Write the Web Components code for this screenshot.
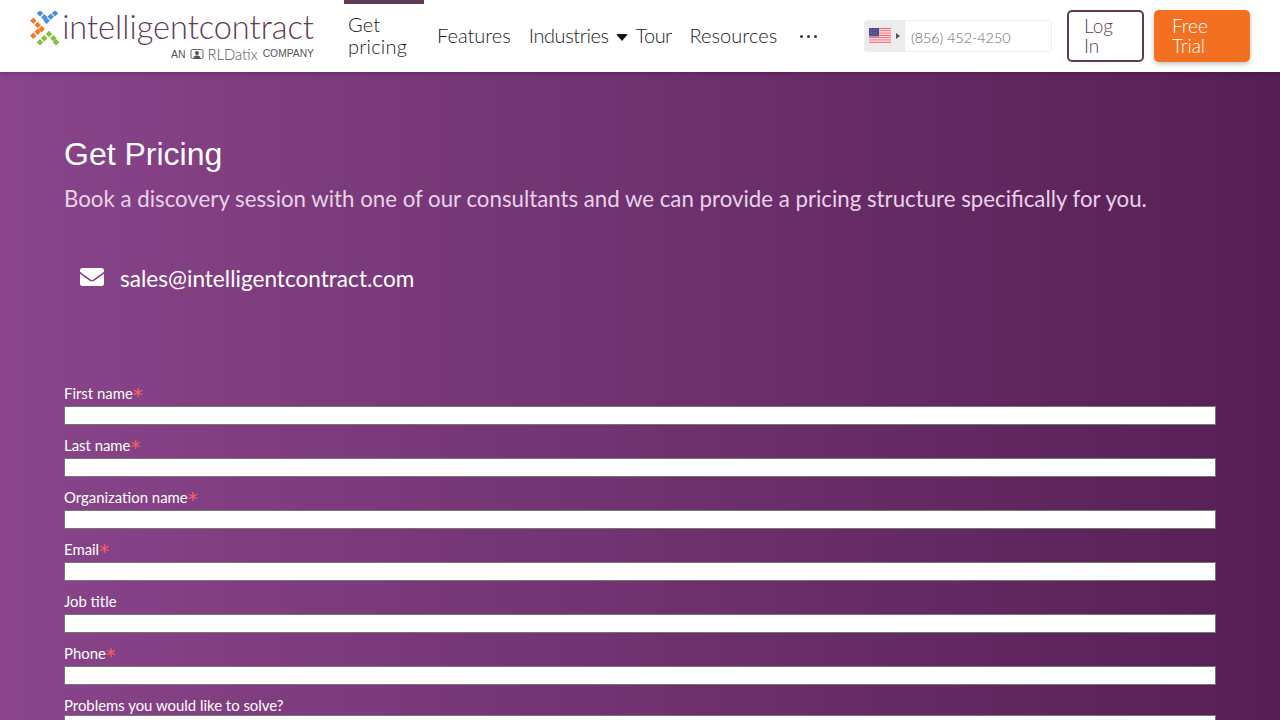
<!doctype html>
<html lang="en"><head><meta charset="utf-8"><title>Get Pricing</title>
<style>
html,body{margin:0;height:720px;overflow:hidden}
body{font-family:Lato,"Liberation Sans",sans-serif;background:linear-gradient(90deg,#8a458b 0%,#551f54 100%)}
</style></head><body>
<site-header></site-header>
<pricing-hero></pricing-hero>
<pricing-form></pricing-form>
<script>
const shadow=(el,html)=>{el.attachShadow({mode:'open'}).innerHTML=html};
class BrandLogo extends HTMLElement{constructor(){super();
const pts=[['#4f8fd6',[[40,14.3],[44.3,18.3],[55,14.3],[50.7,17.7],[46.7,21.7]]],['#f47a26',[[33.3,21.7],[37.7,26],[41.7,30],[33.3,36.7],[37.7,32.7]]],['#86bf3f',[[40,43.3],[44.3,39.3],[49,35],[53.3,39.3],[56,43.3]]]];
const sq=pts.map(([c,l])=>l.map(([x,y])=>`<rect x="${x-30-2.3}" y="${y-12-2.3}" width="4.6" height="4.6" fill="${c}" transform="rotate(45 ${x-30} ${y-12})"/>`).join('')).join('');
shadow(this,`<style>
:host{display:flex;width:284px;height:50px;gap:3px;flex:none}
svg{flex:none}
.t{display:flex;flex-direction:column;align-items:flex-end;flex:1}
.n{font:300 32.5px/32px Lato,sans-serif;color:#5f3b55;white-space:nowrap}
.s{display:flex;align-items:center;gap:4px;color:#555;font:400 10.5px/14px "Liberation Sans",sans-serif;white-space:nowrap;margin-top:4px}
.s b{font:300 14.8px/14px Lato,sans-serif}
</style>
<svg width="29" height="36" viewBox="0 0 29 36">${sq}</svg>
<div class="t"><div class="n">intelligentcontract</div>
<div class="s"><span>AN</span><svg width="14" height="13" viewBox="0 0 14 13"><path d="M2.500 1.500h9a1.500 1.500 0 0 1 1.500 1.500v6a1.500 1.500 0 0 1-1.500 1.500h-9a1.500 1.500 0 0 1-1.500-1.500v-6a1.500 1.500 0 0 1 1.500-1.500z" fill="none" stroke="#666"/><circle cx="7" cy="5" r="2" fill="#555"/><path d="M3.500 11c0-3 1.500-3.500 3.500-3.500s3.500.5 3.500 3.500z" fill="#555"/></svg><b>RLDatix</b><span style="font-size:10.3px;margin-left:1px">COMPANY</span></div></div>`)}}
class NavItem extends HTMLElement{constructor(){super();shadow(this,`<style>
:host{display:block;font:300 20px/22px Lato,sans-serif;color:#222;flex:none;margin-top:-2px}
:host([active]){box-sizing:border-box;align-self:flex-start;width:80px;height:72px;border-top:4px solid #5f3b55;padding:9px 4px 0;letter-spacing:.2px;margin-top:0}
</style><slot></slot>`)}}
class PhoneInput extends HTMLElement{constructor(){super();
let stripes='';for(let i=0;i<7;i++)stripes+=`<rect y="${i*2.29}" width="22" height="1.14" fill="#f0646e"/><rect y="${i*2.29+1.14}" width="22" height="1.15" fill="#fbe3e4"/>`;
let stars='';for(let y=1;y<8;y+=1.6)for(let x=1;x<9;x+=1.6)stars+=`<circle cx="${x}" cy="${y}" r=".35" fill="#aab"/>`;
shadow(this,`<style>
:host{display:flex;box-sizing:border-box;width:188px;height:32px;border:1px solid #eee;border-radius:3px;flex:none;background:#fff;overflow:hidden}
.f{width:40px;flex:none;background:#ececec;display:flex;align-items:center;padding-left:4px;box-sizing:border-box;gap:5px}
.c{width:0;height:0;border-left:4px solid #555;border-top:3px solid transparent;border-bottom:3px solid transparent}
input{border:0;outline:0;background:none;flex:1;min-width:0;padding:2px 0 0 6px;font:300 14.3px Lato,sans-serif;color:#666}
input::placeholder{color:#666;opacity:1}
</style><div class="f"><svg width="22" height="16" viewBox="0 0 22 16">${stripes}<rect width="10" height="8.500" fill="#4a4a90"/>${stars}</svg><i class="c"></i></div><input placeholder="(856) 452-4250" aria-label="Phone number">`)}}
class CtaButton extends HTMLElement{constructor(){super();shadow(this,`<style>
:host{display:block;box-sizing:border-box;height:52px;border-radius:5px;padding:4px 15px;font:300 19px/20px Lato,sans-serif;flex:none;border:2px solid #5f3b55;color:#5f3b55;width:77px}
:host([primary]){width:96px;border:0;padding:6px 18px;background:#f37021;color:#fff;box-shadow:0 2px 5px rgba(0,0,0,.25)}
</style><slot></slot>`)}}
class SiteHeader extends HTMLElement{constructor(){super();shadow(this,`<style>
:host{display:flex;height:72px;background:#fff;box-shadow:0 1px 5px rgba(0,0,0,.25);position:relative;align-items:center;padding:0 30px;box-sizing:border-box}
nav{display:flex;align-items:center;margin-left:30px;height:72px;flex:none}
.dots{display:flex;gap:4px;margin-left:23px}
.dots i{width:3px;height:3px;border-radius:50%;background:#333}
.car{width:0;height:0;border-top:7px solid #111;border-left:6px solid transparent;border-right:6px solid transparent;margin:3px 8px 0 7px;border-radius:2px}
.end{display:flex;gap:10px;align-items:center;margin-left:auto}
phone-input{margin-right:5px}
</style><brand-logo></brand-logo>
<nav><nav-item active>Get pricing</nav-item><nav-item style="margin-left:13px">Features</nav-item><nav-item style="margin-left:18px;letter-spacing:-.4px">Industries</nav-item><i class="car"></i><nav-item style="letter-spacing:-.6px">Tour</nav-item><nav-item style="margin-left:18px;letter-spacing:.05px">Resources</nav-item><div class="dots"><i></i><i></i><i></i></div></nav>
<div class="end"><phone-input></phone-input><cta-button>Log In</cta-button><cta-button primary>Free Trial</cta-button></div>`)}}
class PricingHero extends HTMLElement{constructor(){super();shadow(this,`<style>
:host{display:block;padding:62px 64px 0;color:#fff;height:312px;box-sizing:border-box}
h1{margin:0;font:400 32px/40px "Liberation Sans",Arial,sans-serif}
p{margin:10px 0 0;font:400 22.25px/30px Lato,sans-serif;color:#e8d3e8}
a{display:flex;align-items:center;gap:16px;margin:50px 0 0 16px;font:400 22.6px/30px Lato,sans-serif;color:#fff;text-decoration:none}
svg{width:24px;height:24px;fill:#fff;flex:none;margin-top:-5px}
</style><h1>Get Pricing</h1><p>Book a discovery session with one of our consultants and we can provide a pricing structure specifically for you.</p>
<a href="#"><svg viewBox="0 0 512 512"><path d="M502.3 190.8c3.900-3.100 9.700-.2 9.700 4.700V400c0 26.500-21.500 48-48 48H48c-26.500 0-48-21.500-48-48V195.600c0-5 5.700-7.800 9.700-4.700 22.400 17.400 52.100 39.500 154.100 113.600 21.100 15.400 56.700 47.800 92.200 47.600 35.700.3 72-32.800 92.300-47.600 102-74.100 131.600-96.300 154-113.700zM256 320c23.200.4 56.600-29.200 73.400-41.400 132.700-96.300 142.800-104.700 173.400-128.700 5.800-4.500 9.200-11.500 9.200-18.900v-19c0-26.500-21.500-48-48-48H48C21.500 64 0 85.500 0 112v19c0 7.400 3.400 14.300 9.200 18.900 30.600 23.900 40.700 32.400 173.400 128.700 16.800 12.200 50.200 41.800 73.400 41.400z"/></svg>sales@intelligentcontract.com</a>`)}}
class FormField extends HTMLElement{constructor(){super();const r=this.hasAttribute('required'),ta=this.hasAttribute('area');shadow(this,`<style>
:host{display:block;height:${ta?'auto':'52px'}}
label{display:block;font:400 14.9px/18px Lato,sans-serif;color:#fff;height:${ta?'19px':'22px'}}
span{color:#f2645e;font:400 20px/12px "DejaVu Sans",sans-serif;vertical-align:-3px}
input,textarea{display:block;box-sizing:border-box;width:100%;height:19px;margin:0;padding:0;border:1px solid #767676;background:#fff;border-radius:0;outline:0}
textarea{height:5px;resize:none;border-bottom:0}
</style><label><slot></slot>${r?'<span>*</span>':''}</label>${ta?'<textarea></textarea>':'<input type="text">'}`);
this.shadowRoot.querySelector(ta?'textarea':'input').setAttribute('aria-label',this.textContent)}}
class PricingForm extends HTMLElement{constructor(){super();shadow(this,`<style>
:host{display:block;padding:0 64px}
</style><form-field required>First name</form-field><form-field required>Last name</form-field><form-field required>Organization name</form-field><form-field required>Email</form-field><form-field>Job title</form-field><form-field required>Phone</form-field><form-field area>Problems you would like to solve?</form-field>`)}}
customElements.define('brand-logo',BrandLogo);
customElements.define('nav-item',NavItem);
customElements.define('phone-input',PhoneInput);
customElements.define('cta-button',CtaButton);
customElements.define('form-field',FormField);
customElements.define('site-header',SiteHeader);
customElements.define('pricing-hero',PricingHero);
customElements.define('pricing-form',PricingForm);
</script>
</body></html>
